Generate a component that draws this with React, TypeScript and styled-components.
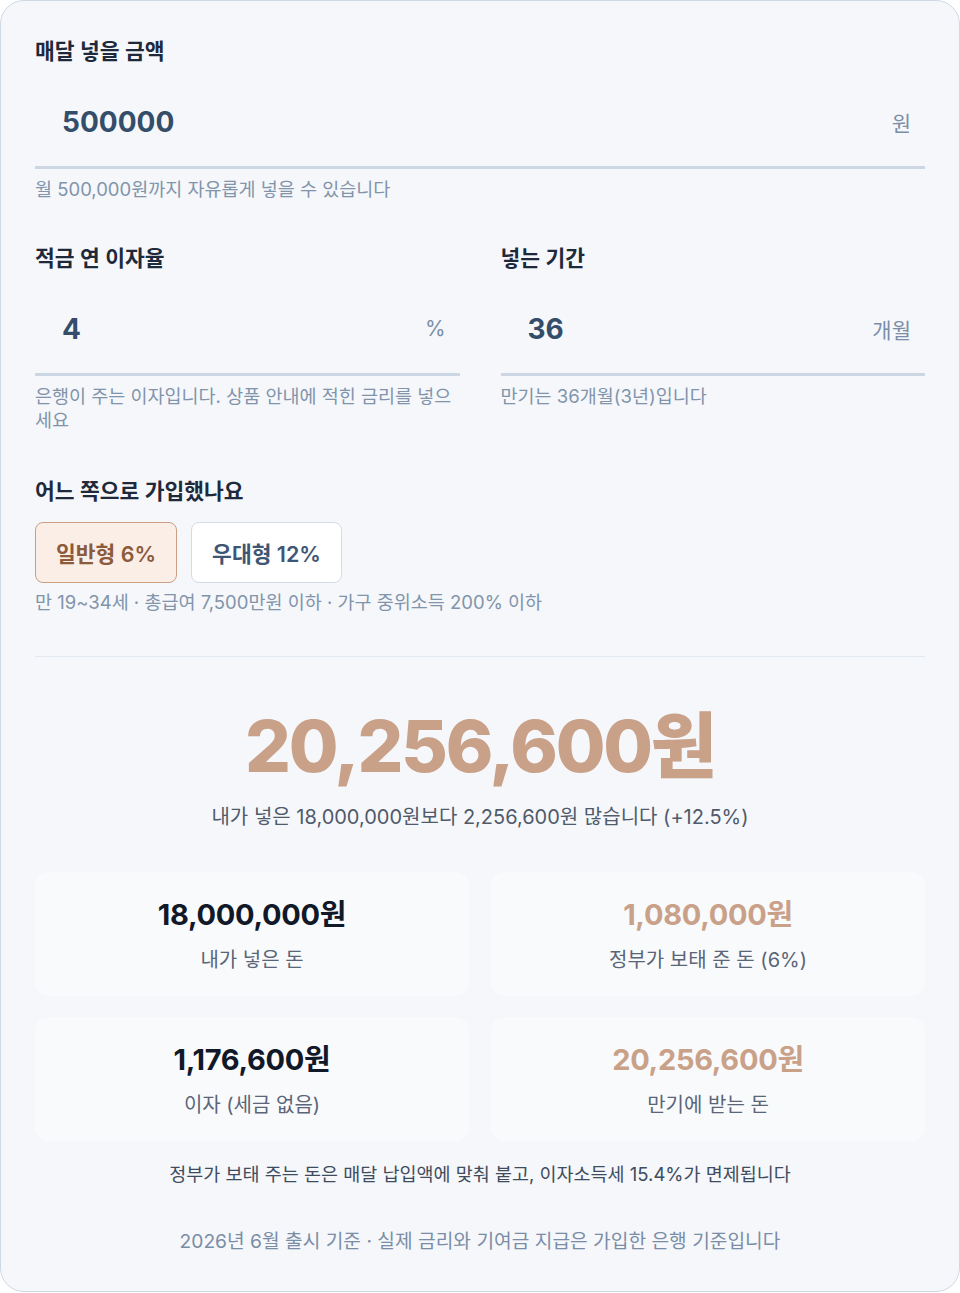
import React from 'react';
import styled, { createGlobalStyle } from 'styled-components';

const GlobalStyle = createGlobalStyle`
  body {
    margin: 0;
    background: #ffffff;
    font-family: "Inter", "Noto Sans CJK KR", sans-serif;
  }
`;

const Panel = styled.div`
  box-sizing: border-box;
  width: 960px;
  min-height: 1292px;
  background: #f5f7fa;
  border: 1px solid #cfd8e3;
  border-radius: 24px;
  padding: 36px 34px 37px 34px;
  display: flex;
  flex-direction: column;
`;

const Section = styled.div<{ mb?: number }>`
  display: flex;
  flex-direction: column;
  margin-bottom: ${(p) => p.mb ?? 0}px;
`;

const Row = styled.div`
  display: grid;
  grid-template-columns: 1fr 1fr;
  column-gap: 41px;
  margin-bottom: 45px;
`;

const Label = styled.div`
  font-size: 21.5px;
  line-height: 28px;
  font-weight: 600;
  color: #1e293b;
`;

const Field = styled.div`
  margin-top: 12px;
  height: 89px;
  display: flex;
  align-items: center;
  justify-content: space-between;
  padding: 0 14px 0 27px;
  border-bottom: 3px solid #cdd7e3;
`;

const Value = styled.span`
  font-size: 28px;
  font-weight: 700;
  color: #334d6b;
`;

const Unit = styled.span`
  font-size: 21px;
  color: #7b8ea7;
`;

const Hint = styled.div<{ mt?: number }>`
  margin-top: ${(p) => p.mt ?? 8}px;
  font-size: 18.5px;
  line-height: 24px;
  color: #8194ab;
`;

const Choices = styled.div`
  display: flex;
  gap: 14px;
  margin-top: 17px;
`;

const Choice = styled.button<{ active?: boolean }>`
  box-sizing: border-box;
  height: 61px;
  padding: 0 20px;
  border-radius: 8px;
  font-family: inherit;
  font-size: 21.5px;
  font-weight: 600;
  border: 1.5px solid ${(p) => (p.active ? '#cc9f84' : '#d3dce6')};
  background: ${(p) => (p.active ? '#fbeee6' : '#ffffff')};
  color: ${(p) => (p.active ? '#8b5b3c' : '#3e5673')};
`;

const Divider = styled.hr`
  border: none;
  border-top: 1px solid #e2e8f0;
  margin: 42px 0 0 0;
  width: 100%;
`;

const Result = styled.div`
  display: flex;
  flex-direction: column;
  align-items: center;
  margin-top: 46px;
`;

const BigNumber = styled.div`
  font-size: 72px;
  line-height: 86px;
  font-weight: 800;
  color: #c9a189;
  letter-spacing: -2.2px;
`;

const Sub = styled.div`
  margin-top: 14px;
  font-size: 20px;
  line-height: 28px;
  color: #4f5a6b;
`;

const Stats = styled.div`
  display: grid;
  grid-template-columns: 1fr 1fr;
  gap: 21px 22px;
  margin-top: 41px;
`;

const StatCard = styled.div`
  box-sizing: border-box;
  height: 124px;
  border-radius: 14px;
  background: #f9fafc;
  display: flex;
  flex-direction: column;
  align-items: center;
  padding-top: 25px;
`;

const StatValue = styled.div<{ accent?: boolean }>`
  font-size: 29px;
  line-height: 36px;
  font-weight: 700;
  color: ${(p) => (p.accent ? '#c9a189' : '#111827')};
  letter-spacing: -0.3px;
`;

const StatLabel = styled.div`
  margin-top: 13px;
  font-size: 20px;
  line-height: 28px;
  color: #5a6577;
`;

const Note = styled.div<{ mt: number; muted?: boolean }>`
  margin-top: ${(p) => p.mt}px;
  text-align: center;
  font-size: ${(p) => (p.muted ? 19.2 : 18.5)}px;
  line-height: 24px;
  color: ${(p) => (p.muted ? '#7b8da6' : '#3f4c5e')};
`;

const stats = [
  { value: '18,000,000원', label: '내가 넣은 돈', accent: false },
  { value: '1,080,000원', label: '정부가 보태 준 돈 (6%)', accent: true },
  { value: '1,176,600원', label: '이자 (세금 없음)', accent: false },
  { value: '20,256,600원', label: '만기에 받는 돈', accent: true },
];

export default function App() {
  return (
    <>
      <GlobalStyle />
      <Panel>
        <Section mb={43}>
          <Label>매달 넣을 금액</Label>
          <Field>
            <Value>500000</Value>
            <Unit>원</Unit>
          </Field>
          <Hint>월 500,000원까지 자유롭게 넣을 수 있습니다</Hint>
        </Section>

        <Row>
          <Section>
            <Label>적금 연 이자율</Label>
            <Field>
              <Value>4</Value>
              <Unit>%</Unit>
            </Field>
            <Hint>은행이 주는 이자입니다. 상품 안내에 적힌 금리를 넣으세요</Hint>
          </Section>
          <Section>
            <Label>넣는 기간</Label>
            <Field>
              <Value>36</Value>
              <Unit>개월</Unit>
            </Field>
            <Hint>만기는 36개월(3년)입니다</Hint>
          </Section>
        </Row>

        <Section>
          <Label>어느 쪽으로 가입했나요</Label>
          <Choices>
            <Choice active>일반형 6%</Choice>
            <Choice>우대형 12%</Choice>
          </Choices>
          <Hint mt={7}>만 19~34세 · 총급여 7,500만원 이하 · 가구 중위소득 200% 이하</Hint>
        </Section>

        <Divider />

        <Result>
          <BigNumber>20,256,600원</BigNumber>
          <Sub>내가 넣은 18,000,000원보다 2,256,600원 많습니다 (+12.5%)</Sub>
        </Result>

        <Stats>
          {stats.map((s) => (
            <StatCard key={s.label}>
              <StatValue accent={s.accent}>{s.value}</StatValue>
              <StatLabel>{s.label}</StatLabel>
            </StatCard>
          ))}
        </Stats>

        <Note mt={21}>정부가 보태 주는 돈은 매달 납입액에 맞춰 붙고, 이자소득세 15.4%가 면제됩니다</Note>
        <Note mt={43} muted>
          2026년 6월 출시 기준 · 실제 금리와 기여금 지급은 가입한 은행 기준입니다
        </Note>
      </Panel>
    </>
  );
}
